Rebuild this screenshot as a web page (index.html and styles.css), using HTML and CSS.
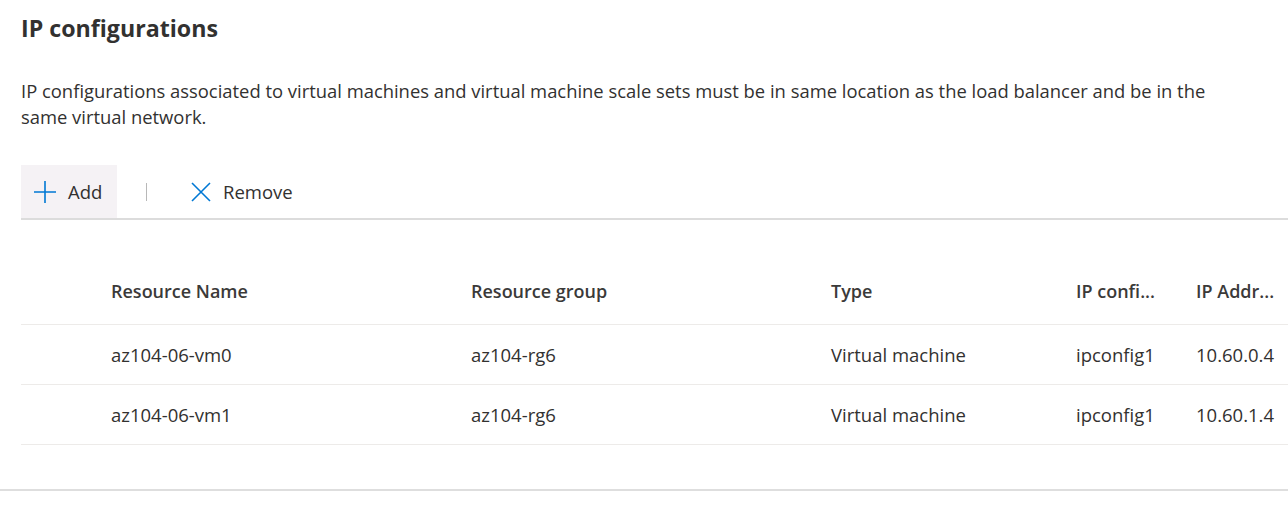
FILE: index.html
```html
<!DOCTYPE html>
<html>
<head>
<meta charset="utf-8">
<link rel="stylesheet" href="styles.css">
</head>
<body>
<div class="page">
  <h2 class="title">IP configurations</h2>
  <p class="desc">IP configurations associated to virtual machines and virtual machine scale sets must be in same location as the load balancer and be in the<br>same virtual network.</p>
  <div class="toolbar">
    <button class="tb-btn add">
      <svg width="24" height="24" viewBox="0 0 24 24"><path d="M12 1v22M1 12h22" stroke="#0078d4" stroke-width="1.6" fill="none"/></svg>
      <span>Add</span>
    </button>
    <span class="sep"></span>
    <button class="tb-btn remove">
      <svg width="22" height="22" viewBox="0 0 22 22"><path d="M2 2l18 18M20 2L2 20" stroke="#0078d4" stroke-width="1.6" fill="none"/></svg>
      <span>Remove</span>
    </button>
  </div>
  <div class="table">
    <div class="row head">
      <div class="cell"></div>
      <div class="cell">Resource Name</div>
      <div class="cell">Resource group</div>
      <div class="cell">Type</div>
      <div class="cell">IP confi...</div>
      <div class="cell">IP Addr...</div>
    </div>
    <div class="row">
      <div class="cell"></div>
      <div class="cell">az104-06-vm0</div>
      <div class="cell">az104-rg6</div>
      <div class="cell">Virtual machine</div>
      <div class="cell">ipconfig1</div>
      <div class="cell">10.60.0.4</div>
    </div>
    <div class="row">
      <div class="cell"></div>
      <div class="cell">az104-06-vm1</div>
      <div class="cell">az104-rg6</div>
      <div class="cell">Virtual machine</div>
      <div class="cell">ipconfig1</div>
      <div class="cell">10.60.1.4</div>
    </div>
  </div>
</div>
<div class="footer-line"></div>
</body>
</html>
```
FILE: styles.css
```css
html, body {
  margin: 0;
  padding: 0;
  background: #ffffff;
}
body {
  font-family: "Open Sans", "Noto Sans", sans-serif;
  color: #323130;
  overflow: hidden;
}
.page {
  padding: 14px 0 0 21px;
}
.title {
  margin: 0;
  font-size: 23.2px;
  font-weight: 700;
  line-height: 28px;
  color: #323130;
}
.desc {
  margin: 36px 0 0 0;
  font-size: 18.4px;
  line-height: 26px;
  color: #323130;
}
.toolbar {
  margin-top: 35px;
  display: flex;
  align-items: center;
  height: 53px;
  border-bottom: 2px solid #dcdcdc;
}
.tb-btn {
  display: flex;
  align-items: center;
  gap: 11px;
  height: 53px;
  border: 0;
  background: transparent;
  font-family: inherit;
  font-size: 18.5px;
  color: #323130;
  padding: 0 12px;
}
.tb-btn.add {
  background: #f5f2f5;
  width: 96px;
  padding-left: 12px;
}
.sep {
  width: 1px;
  height: 18px;
  background: #b8b8b8;
  margin: 0 31px 0 29px;
}
.table {
  margin-top: 38px;
}
.row {
  display: grid;
  grid-template-columns: 90px 360px 360px 245px 120px 1fr;
  align-items: center;
  height: 59px;
  border-bottom: 1px solid #edebe9;
  font-size: 18.5px;
}
.row.head {
  height: 66px;
  font-weight: 600;
  font-size: 18px;
  color: #3b3a39;
}
.cell {
  white-space: nowrap;
}
.footer-line {
  margin-top: 44px;
  height: 2px;
  background: #dedede;
}
```
